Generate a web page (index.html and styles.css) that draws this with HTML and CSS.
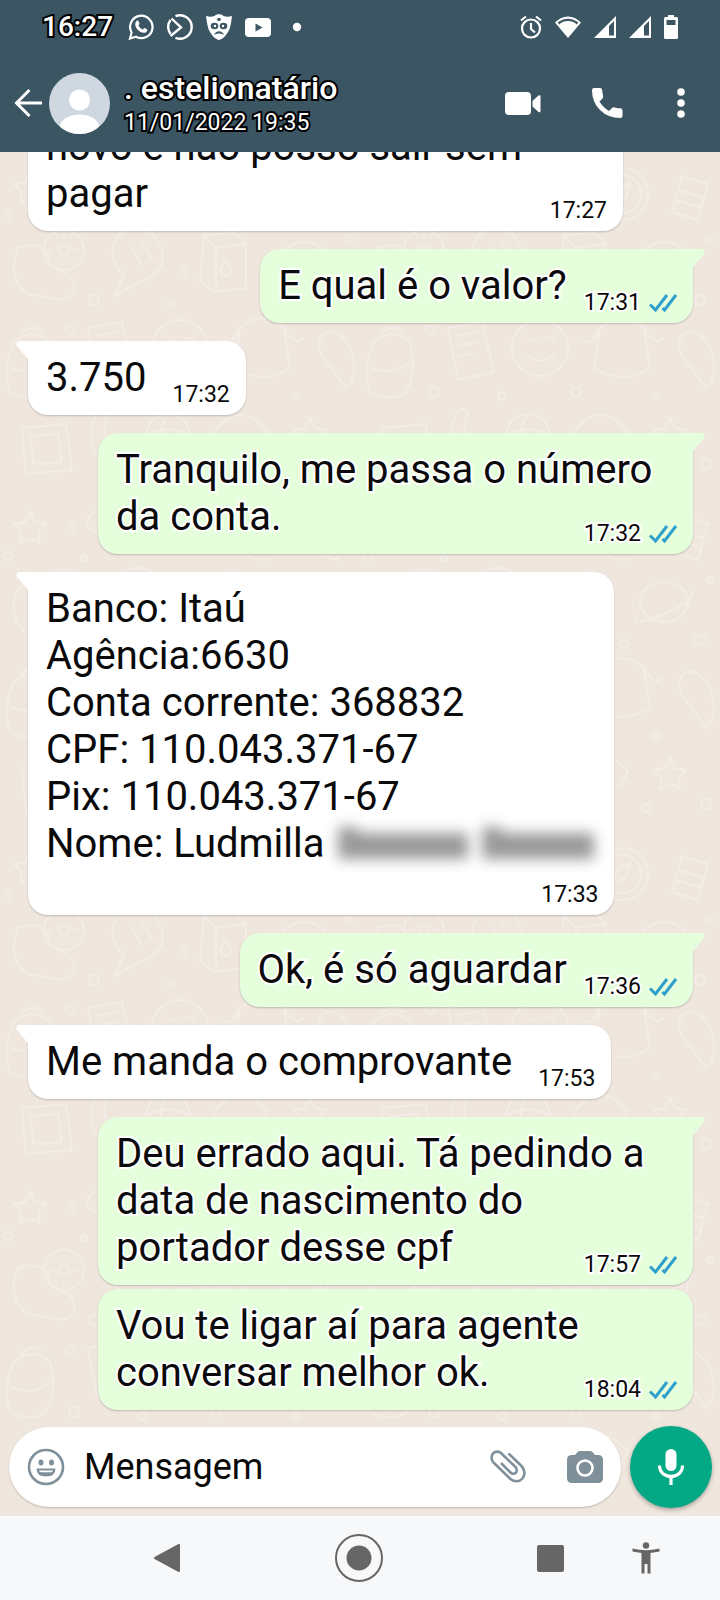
FILE: index.html
```html
<!DOCTYPE html>
<html lang="pt-BR">
<head>
<meta charset="utf-8">
<meta name="viewport" content="width=device-width, initial-scale=1">
<title>Conversa</title>
<link rel="stylesheet" href="styles.css">
</head>

<body>
<!-- shared shapes -->
<svg class="defs" width="0" height="0" aria-hidden="true">
	<symbol id="ticks" viewBox="0 0 28 20"><path d="M1 11.500l5.500 5.500L18 2M13.500 15l2 2L27 2" fill="none" stroke="#2f9fcb" stroke-width="3"/></symbol>
	<symbol id="signal" viewBox="0 0 22 22"><path d="M0 22L22 0v22z" fill="#fff"/><path d="M15 10l5-5v14.500h-5z" fill="#3b5563"/></symbol>
</svg>

<header class="top">
	<div class="status">
		<span class="clock">16:27</span>
		<div class="notes">
			<svg width="26" height="26" viewBox="0 0 26 26"><path d="M2 24.500l1.600-6A11.200 11.200 0 1 1 8 22.800z" fill="none" stroke="#fff" stroke-width="2.200"/><path d="M8.500 7c.8-.8 1.700-.6 2 .1l1 2.300c.1.500-1 1.600-1 2 .9 1.900 2.300 3.200 4.200 4 .5.100 1.300-1.600 1.900-1.400l2.400 1.200c.7.500.2 2-.6 2.700-2.900 2.200-7-.2-9.200-2.700C6.900 12.500 6.500 9.200 8.500 7z" fill="#fff"/></svg>
			<svg width="26" height="26" viewBox="0 0 26 26" fill="none" stroke="#fff" stroke-width="2.400"><path d="M8.500 2.200A11.700 11.700 0 1 1 8.500 23.800"/><path d="M3.500 20A11.700 11.700 0 0 1 3.500 6"/><path d="M4.500 4.500L14 13.500 3.500 22"/></svg>
			<svg width="26" height="26" viewBox="0 0 26 26"><path d="M0 2c3 1 6 1 8.500 0 1.500-2.400 7.500-2.400 9 0C20 3 23 3 26 2c-.5 4-1 8-2.500 13C21 21 17 25 13 26 9 25 5 21 2.500 15 1 10 .5 6 0 2z" fill="#fff"/><g fill="#3b5563"><ellipse cx="8.500" cy="12" rx="3.800" ry="3.300"/><ellipse cx="17.500" cy="12" rx="3.800" ry="3.300"/><circle cx="13" cy="5.500" r="1.800"/><path d="M8 21c2-5 8-5 10 0-3-2-7-2-10 0z"/></g><circle cx="9" cy="12" r="1.200" fill="#fff"/><circle cx="17" cy="12" r="1.200" fill="#fff"/></svg>
			<svg width="26" height="26" viewBox="0 0 26 26"><rect y="4" width="26" height="19" rx="4" fill="#fff"/><path d="M10.500 9.500l7 4-7 4z" fill="#3b5563"/></svg>
			<svg width="26" height="26" viewBox="0 0 26 26"><circle cx="13" cy="13" r="4.200" fill="#fff"/></svg>
		</div>
		<div class="phone-state">
			<svg width="22" height="24" viewBox="0 0 22 24" fill="none" stroke="#fff" stroke-width="2.200"><circle cx="11" cy="13.500" r="9"/><path d="M11 8v6l4 3.500M1 5.500L6 1.500M21 5.500l-5-4"/></svg>
			<svg width="26" height="22" viewBox="0 0 26 22"><path d="M13 22L0 6.500C7.500-1.500 18.500-1.500 26 6.500z" fill="#fff"/><path d="M3.500 7.500C9 2.700 17 2.700 22.500 7.500" fill="none" stroke="#3b5563" stroke-width="2.400"/></svg>
			<svg width="22" height="22"><use href="#signal"/></svg>
			<svg width="22" height="22"><use href="#signal"/></svg>
			<svg width="14" height="24" viewBox="0 0 14 24"><path d="M4 0h6v2h2.500A1.500 1.500 0 0 1 14 3.500v19a1.500 1.500 0 0 1-1.500 1.500h-11A1.500 1.500 0 0 1 0 22.500v-19A1.500 1.500 0 0 1 1.500 2H4z" fill="#fff"/><path d="M2.500 5h9v5h-9z" fill="#3b5563"/></svg>
		</div>
	</div>
	<div class="bar">
		<button class="back" aria-label="Voltar"><svg width="28" height="28" viewBox="0 0 28 28" fill="none" stroke="#fff" stroke-width="3"><path d="M28 14H3M15.500 1L2.500 14l13 13"/></svg></button>
		<svg class="avatar" width="61" height="61" viewBox="0 0 61 61"><clipPath id="round"><circle cx="30.500" cy="30.500" r="30.500"/></clipPath><g clip-path="url(#round)"><path d="M0 0h61v61H0z" fill="#cfd8e0"/><circle cx="30.500" cy="27" r="10.500" fill="#fff"/><path d="M11 52c5-14 34-14 39 0v10H11z" fill="#fff"/></g></svg>
		<div class="who">
			<h1>. estelionatário</h1>
			<p>11/01/2022 19:35</p>
		</div>
		<div class="actions">
			<button aria-label="Chamada de vídeo"><svg width="36" height="36" viewBox="0 0 36 36" fill="#fff"><rect y="7" width="26" height="23" rx="4"/><path d="M27.500 16l6-5.500q2-1 2 1v14.500q0 2-2 1l-6-5.500z"/></svg></button>
			<button aria-label="Ligar"><svg width="32" height="32" viewBox="0 0 32 32" fill="#fff"><path d="M3 1h6q2 0 2.200 2.200.2 3 .9 5.600.4 1.700-.8 3L8.500 14.500q3.500 6 9.500 9.500l2.800-2.800q1.200-1.200 2.900-.8 2.700.8 5.800.9Q31.500 21.500 31.500 23.500V29q0 2-2 2Q17 31 9 23 1 15 1 3.200 1 1 3 1z"/></svg></button>
			<button aria-label="Mais opções"><svg width="8" height="30" viewBox="0 0 8 30" fill="#fff"><circle cx="4" cy="4" r="3.800"/><circle cx="4" cy="15" r="3.800"/><circle cx="4" cy="26" r="3.800"/></svg></button>
		</div>
	</div>
</header>

<main class="chat">
	<!-- wallpaper doodles -->
	<svg class="wallpaper" width="100%" height="100%" aria-hidden="true">
		<pattern id="doodles" width="360" height="340" patternUnits="userSpaceOnUse">
			<g fill="none" stroke="#f4ece6" stroke-width="2" stroke-linejoin="round" stroke-linecap="round">
				<path d="M30 20l5 10 11 2-8 8 2 11-10-5-10 5 2-11-8-8 11-2z"/>
				<path d="M100 18q14-14 26 0 16 2 10 16-2 8-14 6H98q-14-2-10-12 2-8 12-10z"/>
				<path d="M180 15q2 14 14 16-12 2-14 16-2-14-14-16 12-2 14-16z"/>
				<circle cx="262" cy="42" r="26"/><circle cx="262" cy="42" r="19"/><path d="M254 50l4-14 12-5-4 14z"/>
				<path d="M322 24l26 8-10 36-26-8zM318 38l26 8M316 48l26 8"/>
				<path d="M18 96q-12 30 10 46l34 6q20-6 8-24l-20-12q-4-26-32-16z"/>
				<circle cx="64" cy="98" r="20"/><circle cx="64" cy="98" r="5"/><path d="M64 83v3M64 110v3M49 98h3M76 98h3"/>
				<path d="M118 84q30-22 44 14 6 22-26 34l-22 12 10-20q-20-20-6-40zM132 96l10 18M142 90l10 18"/>
				<path d="M204 84l30-4 12 12v44l-32 4-14-12zM204 84l12 12 30-4M216 96v42"/><path d="M226 108q-12 14 0 16 10-2 0-16z"/>
				<ellipse cx="304" cy="110" rx="24" ry="20"/><path d="M276 124q-8 12 28-2 36-16 26-24"/>
				<path d="M14 190q20-16 36 0 8 34-6 52-16 8-34-2-8-26 4-50zM12 216q20 8 38-6M22 182q10-12 20-2"/>
				<path d="M88 176l34-6 12 50-36 8zM96 184l20-4M98 194l20-4M100 204l14-3"/>
				<circle cx="180" cy="196" r="28"/><path d="M168 190q4-5 8 0M186 188q4-5 8 0M168 204q14 10 26-2"/>
				<path d="M240 176q22-20 44 0l6 40q-28 18-56 0zM240 176q-10 20-16 12M284 176q12 20 18 10"/>
				<path d="M326 180q-16 12 4 34l16 22q12-10 6-34-8-24-26-22z"/>
				<path d="M22 276l44-4 6 46-46 4zM30 284l28-2 4 28-28 2z"/>
				<path d="M96 262q-12 34 8 50M108 260q-10 32 8 48M96 262q4-8 12-2M104 312q8 6 12-4"/>
				<circle cx="168" cy="284" r="22"/><path d="M146 284q22-14 44 0M168 262q-14 22 0 44"/>
				<path d="M214 280q26-34 54 0l-8 14q-20-8-40 2zM240 294v24q2 8 10 4"/>
				<path d="M310 266l5 10 11 2-8 8 2 11-10-5-10 5 2-11-8-8 11-2z"/>
				<circle cx="72" cy="36" r="4"/><circle cx="150" cy="60" r="5"/><circle cx="212" cy="58" r="4"/><circle cx="84" cy="66" r="3"/><circle cx="184" cy="120" r="4"/><circle cx="94" cy="148" r="5"/><circle cx="170" cy="152" r="3"/><circle cx="264" cy="152" r="4"/><circle cx="340" cy="148" r="5"/><circle cx="70" cy="178" r="4"/><circle cx="74" cy="240" r="5"/><circle cx="142" cy="244" r="4"/><circle cx="216" cy="240" r="5"/><circle cx="296" cy="244" r="3"/><circle cx="138" cy="322" r="4"/><circle cx="204" cy="322" r="5"/><circle cx="286" cy="316" r="4"/><circle cx="346" cy="312" r="5"/><circle cx="350" cy="88" r="3"/><circle cx="8" cy="64" r="4"/>
			</g>
		</pattern>
		<rect width="100%" height="100%" fill="url(#doodles)"/>
	</svg>

	<div class="messages">
		<div class="msg in">novo e não posso sair sem pagar<span class="time">17:27</span></div>
		<div class="msg out tail">E qual é o valor?<span class="time">17:31<svg width="28" height="20"><use href="#ticks"/></svg></span></div>
		<div class="msg in tail">3.750<span class="time">17:32</span></div>
		<div class="msg out tail">Tranquilo, me passa o número da conta.<span class="time">17:32<svg width="28" height="20"><use href="#ticks"/></svg></span></div>
		<div class="msg in tail stacked">Banco: Itaú<br>Agência:6630<br>Conta corrente: 368832<br>CPF: 110.043.371-67<br>Pix: 110.043.371-67<br>Nome: Ludmilla <span class="hidden-name"><i></i><i></i></span><span class="time">17:33</span></div>
		<div class="msg out tail">Ok, é só aguardar<span class="time">17:36<svg width="28" height="20"><use href="#ticks"/></svg></span></div>
		<div class="msg in tail">Me manda o comprovante<span class="time">17:53</span></div>
		<div class="msg out tail">Deu errado aqui. Tá pedindo a data de nascimento do portador desse cpf<span class="time">17:57<svg width="28" height="20"><use href="#ticks"/></svg></span></div>
		<div class="msg out">Vou te ligar aí para agente conversar melhor ok.<span class="time">18:04<svg width="28" height="20"><use href="#ticks"/></svg></span></div>
	</div>

	<form class="composer">
		<div class="field">
			<button type="button" aria-label="Emoji"><svg width="38" height="38" viewBox="0 0 38 38"><circle cx="19" cy="19" r="17" fill="none" stroke="#80909b" stroke-width="2.600"/><ellipse cx="14" cy="14.500" rx="2.500" ry="3" fill="#80909b"/><ellipse cx="24.500" cy="14.500" rx="2.500" ry="3" fill="#80909b"/><path d="M9.500 20.500h19q0 8-9.500 8t-9.500-8z" fill="#80909b"/><path d="M12 22.500h14q-.5 1.800-2 1.800H14q-1.500 0-2-1.800z" fill="#fff"/></svg></button>
			<input type="text" placeholder="Mensagem" aria-label="Mensagem">
			<button type="button" aria-label="Anexar"><svg width="36" height="34" viewBox="0 0 36 34"><path d="M18.500 3.500L31.500 16c3.500 3.500 4 9 1 12.500-3 3.500-8.500 3.500-12 .5L3.500 12.500C1 10 1 6 3 3.500c2.500-2.500 6-2.500 8.500 0l14 13.500c1.500 1.500 1.500 4 .5 5.500-1.500 1.500-4 1.500-5.500 0L11 13" fill="none" stroke="#80909b" stroke-width="2.600"/></svg></button>
			<button type="button" aria-label="Câmera"><svg width="36" height="34" viewBox="0 0 36 34"><path d="M13 1h10q1.500 0 2.500 1L28 5h3q5 0 5 5v18q0 5-5 5H5q-5 0-5-5V10q0-5 5-5h3l2.500-3Q11.500 1 13 1z" fill="#80909b"/><circle cx="18" cy="18" r="7.500" fill="#80909b" stroke="#fff" stroke-width="2.600"/></svg></button>
		</div>
		<button class="mic" type="button" aria-label="Gravar áudio"><svg width="28" height="36" viewBox="0 0 28 36"><rect x="8.500" width="11" height="22" rx="5.500" fill="#fff"/><path d="M2.500 16.500c0 14.500 23 14.500 23 0M14 27v9" fill="none" stroke="#fff" stroke-width="3.200"/></svg></button>
	</form>
</main>

<nav class="softkeys">
	<button aria-label="Voltar"><svg width="26" height="28" viewBox="0 0 26 28"><path d="M25 1v26L1 14z" fill="#666" stroke="#666" stroke-linejoin="round" stroke-width="2"/></svg></button>
	<button aria-label="Início"><svg width="48" height="48" viewBox="0 0 48 48"><circle cx="24" cy="24" r="23" fill="none" stroke="#666" stroke-width="2"/><circle cx="24" cy="24" r="12.500" fill="#666"/></svg></button>
	<button class="recents" aria-label="Recentes"><svg width="27" height="27"><rect width="27" height="27" rx="2" fill="#666"/></svg></button>
	<button aria-label="Acessibilidade"><svg width="28" height="32" viewBox="0 0 28 32" fill="#666"><circle cx="14" cy="3.500" r="3.200"/><path d="M.5 6.500Q14 10 27.500 6.500v3L18.500 11v20.500h-3v-9.500h-3v9.500h-3V11L.5 9.500z"/></svg></button>
</nav>
</body>
</html>
```
FILE: styles.css
```css
* {margin:0; padding:0; box-sizing:border-box;}
body {height:100vh; display:flex; flex-direction:column; overflow:hidden; font-family:Roboto, "Liberation Sans", sans-serif; color:#0a0a0a; background:#efe6de;}
button {border:0; background:none; display:flex; align-items:center; justify-content:center; cursor:pointer;}
svg {display:block; flex:none;}
.defs {position:absolute;}

/* header */
.top {position:relative; z-index:2; background:#3b5563; color:#fff;}
.status {display:flex; align-items:center; height:54px; padding:0 42px;}
.clock, .who {-webkit-text-stroke:4px #000; paint-order:stroke fill;}
.clock {font-size:28px; font-weight:500; line-height:34px;}
.notes {display:flex; align-items:center; gap:13px; margin-left:15px;}
.phone-state {display:flex; align-items:center; gap:13px; margin-left:auto;}
.bar {display:flex; align-items:center; height:98px; padding:0 35px 0 14px;}
.back {margin-right:7px;}
.who {margin-left:14px;}
.who h1 {font-size:32px; font-weight:500; line-height:40px;}
.who p {font-size:23px; line-height:30px;}
.actions {display:flex; align-items:center; margin-left:auto; gap:50px;}
.actions button:last-child {margin-left:4px;}

/* conversation */
.chat {position:relative; flex:1; min-height:0; display:flex; flex-direction:column; justify-content:flex-end;}
.wallpaper {position:absolute; left:0; top:0; z-index:0;}
.messages {position:relative; display:flex; flex-direction:column; align-items:flex-start; padding:0 27px 16px 28px;}
.msg {position:relative; display:flow-root; margin-top:4px; padding:13px 16px 14px 18px; border-radius:20px; font-size:40px; line-height:47px; box-shadow:0 1px 2px rgba(0,0,0,.2);}
.in {background:#fff; margin-right:70px;}
.out {background:#e5fedb; margin-left:70px; align-self:flex-end; -webkit-text-stroke:4px #fff; paint-order:stroke fill;}
.tail {margin-top:18px;}
.in.tail {border-top-left-radius:0;}
.out.tail {border-top-right-radius:0;}
.tail:before {content:""; position:absolute; top:0; width:14px; height:20px; background:inherit;}
.in.tail:before {left:-12px; clip-path:polygon(0 3px, 2px 0, 14px 0, 14px 20px, 12px 18px, 1px 5px);}
.out.tail:before {right:-12px; clip-path:polygon(14px 3px, 12px 0, 0 0, 0 20px, 2px 18px, 13px 5px);}
.time {float:right; display:flex; align-items:center; gap:8px; margin:27px 0 -7px 26px; font-size:23px; line-height:27px;}
.out .time {margin-left:17px;}
.stacked .time {float:none; justify-content:flex-end; margin:14px 0 -7px;}
.hidden-name {display:inline-flex; align-items:flex-end; gap:14px; margin:0 4px; vertical-align:middle; filter:blur(7px);}
.hidden-name i {width:130px; height:26px; background:#999;}
.hidden-name i + i {width:112px;}
/* taller capital at the start of each word */
.hidden-name i:before {content:""; display:block; width:20px; height:32px; margin-top:-6px; background:#999;}

/* composer */
.composer {position:relative; display:flex; align-items:center; gap:9px; padding:0 8px 8px 9px;}
.field {flex:1; min-width:0; display:flex; align-items:center; height:80px; padding:0 18px; border-radius:40px; background:#fff; box-shadow:0 1px 2px rgba(0,0,0,.2);}
.field input {flex:1; min-width:0; margin:0 19px; border:0; outline:0; background:none; font:36px/44px Roboto, "Liberation Sans", sans-serif;}
.field input::placeholder {color:#0a0a0a; opacity:1;}
.field button:last-child {margin-left:41px;}
.mic {width:82px; height:82px; border-radius:50%; background:#03a884; box-shadow:0 2px 4px rgba(0,0,0,.3);}

/* android keys */
.softkeys {display:flex; align-items:center; height:84px; padding:0 50px 0 143px; background:#f7f8fa;}
.softkeys button {width:48px; height:48px; margin-right:auto;}
.softkeys .recents {margin-right:48px;}
.softkeys button:last-child {margin-right:0;}
```
